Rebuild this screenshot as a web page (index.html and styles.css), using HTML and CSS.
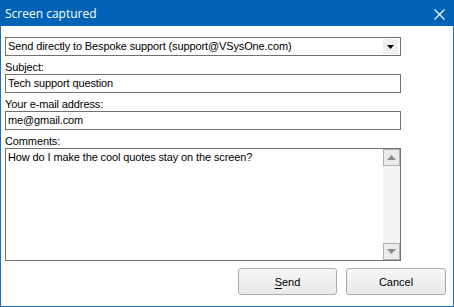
FILE: index.html
```html
<!DOCTYPE html>
<html lang="en">
<head>
  <meta charset="UTF-8">
  <title>Screen captured</title>
  <link rel="stylesheet" href="styles.css">
</head>
<body>
  <div class="window">
    <div class="titlebar">
      <span class="title">Screen captured</span>
      <svg class="close" width="11" height="11" viewBox="0 0 11 11">
        <path d="M0.5 0.5 L10.5 10.5 M10.5 0.5 L0.5 10.5" stroke="#fff" stroke-width="1.1" fill="none"/>
      </svg>
    </div>
    <div class="content">
      <div class="combo">
        <span class="combo-text">Send directly to Bespoke support (support@VSysOne.com)</span>
        <span class="combo-btn">
          <svg width="7" height="4" viewBox="0 0 7 4"><path d="M0 0 H7 L3.5 4 Z" fill="#000"/></svg>
        </span>
      </div>
      <label class="field-label">Subject:</label>
      <div class="edit">Tech support question</div>
      <label class="field-label">Your e-mail address:</label>
      <div class="edit">me@gmail.com</div>
      <label class="field-label">Comments:</label>
      <div class="memo">
        <div class="memo-text">How do I make the cool quotes stay on the screen?</div>
        <div class="scrollbar">
          <div class="sb-btn">
            <svg width="9" height="5" viewBox="0 0 9 5"><path d="M0 5 L4.5 0 L9 5 Z" fill="#8a8a8a"/></svg>
          </div>
          <div class="sb-track"></div>
          <div class="sb-btn">
            <svg width="9" height="5" viewBox="0 0 9 5"><path d="M0 0 H9 L4.5 5 Z" fill="#8a8a8a"/></svg>
          </div>
        </div>
      </div>
      <div class="actions">
        <button class="btn"><u>S</u>end</button>
        <button class="btn btn-cancel">Cancel</button>
      </div>
    </div>
  </div>
</body>
</html>
```

FILE: styles.css
```css
html, body { margin: 0; padding: 0; background: #fff; }
body { font-family: "Liberation Sans", Arial, sans-serif; font-size: 11px; color: #000; }

.window {
  width: 454px;
  height: 307px;
  box-sizing: border-box;
  border: 1px solid #1a6fc0;
  background: #fff;
}
.titlebar {
  height: 25px;
  background: #0063b5;
  display: flex;
  align-items: center;
  justify-content: space-between;
  padding: 0 9px 0 4px;
  margin: -1px -1px 0 -1px;
  padding-top: 1px;
}
.title {
  font-family: "Open Sans", "Noto Sans", sans-serif;
  font-size: 12px;
  color: #fff;
  margin-left: 1px;
}
.close { margin-top: 1px; }

.content { padding: 11px 0 0 4px; letter-spacing: -0.12px; }

.combo {
  width: 396px;
  height: 19px;
  box-sizing: border-box;
  border: 1px solid #707070;
  display: flex;
  align-items: center;
  justify-content: space-between;
}
.combo-text { padding-left: 2px; line-height: 17px; }
.combo-btn {
  width: 15px;
  height: 15px;
  margin-right: 2px;
  background: #f0f0f0;
  display: flex;
  align-items: center;
  justify-content: center;
}

.field-label { display: block; padding-top: 4px; line-height: 14px; }

.edit {
  width: 396px;
  height: 19px;
  box-sizing: border-box;
  border: 1px solid #707070;
  padding-left: 2px;
  line-height: 17px;
}

.memo {
  width: 396px;
  height: 113px;
  box-sizing: border-box;
  border: 1px solid #707070;
  display: flex;
}
.memo-text { flex: 1; padding: 1px 2px; line-height: 15px; }
.scrollbar {
  width: 17px;
  display: flex;
  flex-direction: column;
  background-color: #f7f7f7;
  background-image: repeating-conic-gradient(#eeeeee 0 25%, #fcfcfc 0 50%);
  background-size: 2px 2px;
}
.sb-btn {
  height: 17px;
  box-sizing: border-box;
  border: 1px solid #b0b0b0;
  background: #ebebeb;
  display: flex;
  align-items: center;
  justify-content: center;
}
.sb-track { flex: 1; }

.actions {
  display: flex;
  justify-content: flex-end;
  gap: 9px;
  margin-top: 7px;
  padding-right: 7px;
}
.btn {
  width: 99px;
  height: 27px;
  border: 1px solid #adadad;
  border-radius: 3px;
  background: linear-gradient(#f6f6f6, #e9e9e9);
  font-family: "Liberation Sans", Arial, sans-serif;
  font-size: 11px;
  color: #000;
  padding: 0;
}
.btn u { text-decoration-thickness: 1px; text-underline-offset: 2px; }
.btn-cancel { width: 100px; }
```
